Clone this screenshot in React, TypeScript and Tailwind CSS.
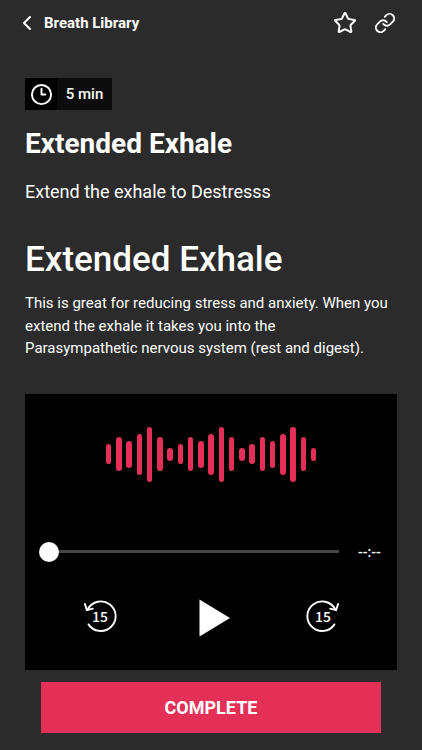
import { ChevronLeft, Clock3, Link, Star } from "lucide-react";

const WAVE = [20, 34, 27, 41, 55, 34, 13];
const BARS = [...WAVE, ...WAVE, ...WAVE];

function SkipIcon({ forward = false }: { forward?: boolean }) {
  return (
    <span className="relative flex h-9 w-9 items-center justify-center">
      <svg
        viewBox="0 0 36 36"
        className={forward ? "absolute inset-0 -scale-x-100" : "absolute inset-0"}
        fill="none"
        stroke="currentColor"
        strokeWidth="1.9"
        strokeLinecap="round"
        strokeLinejoin="round"
      >
        <path d="M5.8 11.2A14.8 14.8 0 1 1 6.5 26.4" />
        <path d="M2.9 5.9L4.9 12.2L10.8 10.6" />
      </svg>
      <span className="relative font-['Noto_Sans_CJK_SC',sans-serif] text-[14px] leading-none font-medium">
        15
      </span>
    </span>
  );
}

export default function App() {
  return (
    <div className="flex h-[750px] w-[422px] flex-col bg-[#2b2b2b] font-[Roboto,sans-serif] text-white">
      {/* Header */}
      <header className="flex h-[46px] items-center pr-[26px] pl-[15px]">
        <button className="flex items-center">
          <ChevronLeft className="h-6 w-6" strokeWidth={2} />
          <span className="ml-[5px] text-[15px] font-bold">Breath Library</span>
        </button>
        <div className="ml-auto flex items-center gap-[17px]">
          <Star className="h-6 w-6" strokeWidth={2} />
          <Link className="h-[22px] w-[22px]" strokeWidth={2} />
        </div>
      </header>

      {/* Session details */}
      <main className="px-[25px] pt-8">
        <div className="flex h-8 w-[87px] bg-[#0c0c0c]">
          <span className="flex w-8 items-center justify-center bg-black">
            <Clock3 className="h-[23px] w-[23px]" strokeWidth={2} />
          </span>
          <span className="flex flex-1 items-center justify-center text-[15px] font-medium">5 min</span>
        </div>
        <h2 className="mt-[17px] text-[28px] leading-[34px] font-bold">Extended Exhale</h2>
        <p className="mt-[18px] text-[18px] leading-[26px]">Extend the exhale to Destresss</p>
        <h1 className="mt-[35px] text-[35px] leading-[40px] font-medium">Extended Exhale</h1>
        <p className="mt-[12px] text-[15px] leading-[22.5px] whitespace-nowrap">
          This is great for reducing stress and anxiety. When you
          <br />
          extend the exhale it takes you into the
          <br />
          Parasympathetic nervous system (rest and digest).
        </p>

        {/* Audio player */}
        <section className="mt-[34px] h-[276px] bg-black pt-[33px]">
          <div className="flex h-[55px] items-center justify-center gap-[4.75px]">
            {BARS.map((height, i) => (
              <span key={i} className="w-[5.5px] rounded-full bg-[#e43056]" style={{ height }} />
            ))}
          </div>
          <div className="mt-[60px] flex h-5 items-center pl-[14px]">
            <span className="h-5 w-5 rounded-full bg-white" />
            <span className="h-[3px] w-[280px] bg-[#474747]" />
            <span className="ml-[19px] text-[14px] leading-5 font-medium">--:--</span>
          </div>
          <div className="mt-[33px] flex h-[42px] items-center pl-[57px]">
            <SkipIcon />
            <svg viewBox="0 0 32 38" className="mt-1 ml-[81px] h-[38px] w-8" fill="currentColor">
              <path d="M0.5 0.5L31 19L0.5 37.5Z" />
            </svg>
            <span className="ml-[74px]">
              <SkipIcon forward />
            </span>
          </div>
        </section>
      </main>

      <button className="mx-[41px] mt-[12.5px] h-[51px] bg-[#e43056] text-[18px] font-bold">COMPLETE</button>
    </div>
  );
}
